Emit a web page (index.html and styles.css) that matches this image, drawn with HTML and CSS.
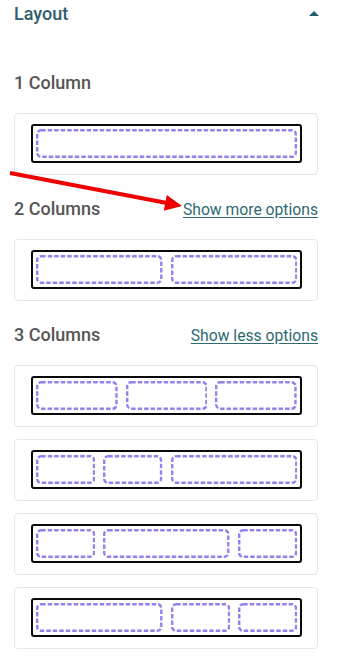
FILE: index.html
```html
<!DOCTYPE html>
<html lang="en">
<head>
    <meta charset="UTF-8">
    <meta name="viewport" content="width=device-width, initial-scale=1.0">
    <title>Layout</title>
    <link rel="stylesheet" href="styles.css">
</head>
<body>
    <div class="panel">
        <div class="panel-head">
            <span class="panel-title">Layout</span>
            <span class="caret"></span>
        </div>

        <div class="group-head first">
            <span class="group-title">1 Column</span>
        </div>
        <div class="option">
            <div class="frame cols-1">
                <svg class="slot"><rect/></svg>
            </div>
        </div>

        <div class="group-head">
            <span class="group-title">2 Columns</span>
            <a href="#" class="toggle">Show more options</a>
        </div>
        <div class="option">
            <div class="frame cols-2">
                <svg class="slot"><rect/></svg>
                <svg class="slot"><rect/></svg>
            </div>
        </div>

        <div class="group-head">
            <span class="group-title">3 Columns</span>
            <a href="#" class="toggle">Show less options</a>
        </div>
        <div class="option-list">
            <div class="option">
                <div class="frame cols-3">
                    <svg class="slot"><rect/></svg>
                    <svg class="slot"><rect/></svg>
                    <svg class="slot"><rect/></svg>
                </div>
            </div>
            <div class="option">
                <div class="frame cols-3-right">
                    <svg class="slot"><rect/></svg>
                    <svg class="slot"><rect/></svg>
                    <svg class="slot"><rect/></svg>
                </div>
            </div>
            <div class="option">
                <div class="frame cols-3-middle">
                    <svg class="slot"><rect/></svg>
                    <svg class="slot"><rect/></svg>
                    <svg class="slot"><rect/></svg>
                </div>
            </div>
            <div class="option">
                <div class="frame cols-3-left">
                    <svg class="slot"><rect/></svg>
                    <svg class="slot"><rect/></svg>
                    <svg class="slot"><rect/></svg>
                </div>
            </div>
        </div>
    </div>

    <!-- annotation -->
    <svg class="annotation" width="341" height="658" viewBox="0 0 341 658">
        <line x1="10" y1="173" x2="167" y2="203" stroke="#ee0000" stroke-width="4"/>
        <polygon points="182,206 163.8,210.7 166.8,194.9" fill="#ee0000"/>
    </svg>
</body>
</html>
```

FILE: styles.css
```css
body {
    margin: 0;
    font-family: Roboto, "Liberation Sans", Arial, sans-serif;
    background: #ffffff;
}

.panel {
    padding: 2px 23px 0 14px;
}

.panel-head {
    display: flex;
    justify-content: space-between;
    align-items: center;
    height: 24px;
}

.panel-title {
    font-size: 18px;
    font-weight: 500;
    line-height: 24px;
    color: #2f5d6b;
}

.caret {
    width: 0;
    height: 0;
    border-left: 5.5px solid transparent;
    border-right: 5.5px solid transparent;
    border-bottom: 5px solid #1f5b6c;
    margin-right: -1px;
    margin-top: -1px;
}

.group-head {
    display: flex;
    justify-content: space-between;
    align-items: baseline;
    margin: 22px 0 18px;
}

.group-head.first {
    margin-top: 45px;
}

.group-title {
    font-size: 18px;
    font-weight: 500;
    line-height: 24px;
    color: #555555;
}

.toggle {
    font-size: 15.7px;
    color: #2c6972;
    text-decoration: underline;
    text-underline-offset: 2px;
}

.option-list {
    display: flex;
    flex-direction: column;
    gap: 12px;
}

.option {
    border: 1px solid #e7e7e7;
    border-radius: 4px;
    padding: 10px 15px 11px 16px;
}

.frame {
    border: 2px solid #0a0a0a;
    border-radius: 3px;
    padding: 3px;
    display: grid;
    gap: 8px;
}

.slot {
    display: block;
    width: 100%;
    height: 29px;
}

.slot rect {
    x: 1.2px;
    y: 1.2px;
    width: calc(100% - 2.4px);
    height: calc(100% - 2.4px);
    rx: 4px;
    fill: none;
    stroke: #9580ee;
    stroke-width: 2.4px;
    stroke-dasharray: 4.5 2;
}

.cols-1 {
    grid-template-columns: 1fr;
}

.cols-2 {
    grid-template-columns: 1fr 1fr;
}

.cols-3 {
    grid-template-columns: 1fr 1fr 1fr;
}

.cols-3-right {
    grid-template-columns: 1fr 1fr calc(50% - 4px);
}

.cols-3-middle {
    grid-template-columns: 1fr calc(50% - 4px) 1fr;
}

.cols-3-left {
    grid-template-columns: calc(50% - 4px) 1fr 1fr;
}

.annotation {
    position: absolute;
    top: 0;
    left: 0;
    pointer-events: none;
}
```
